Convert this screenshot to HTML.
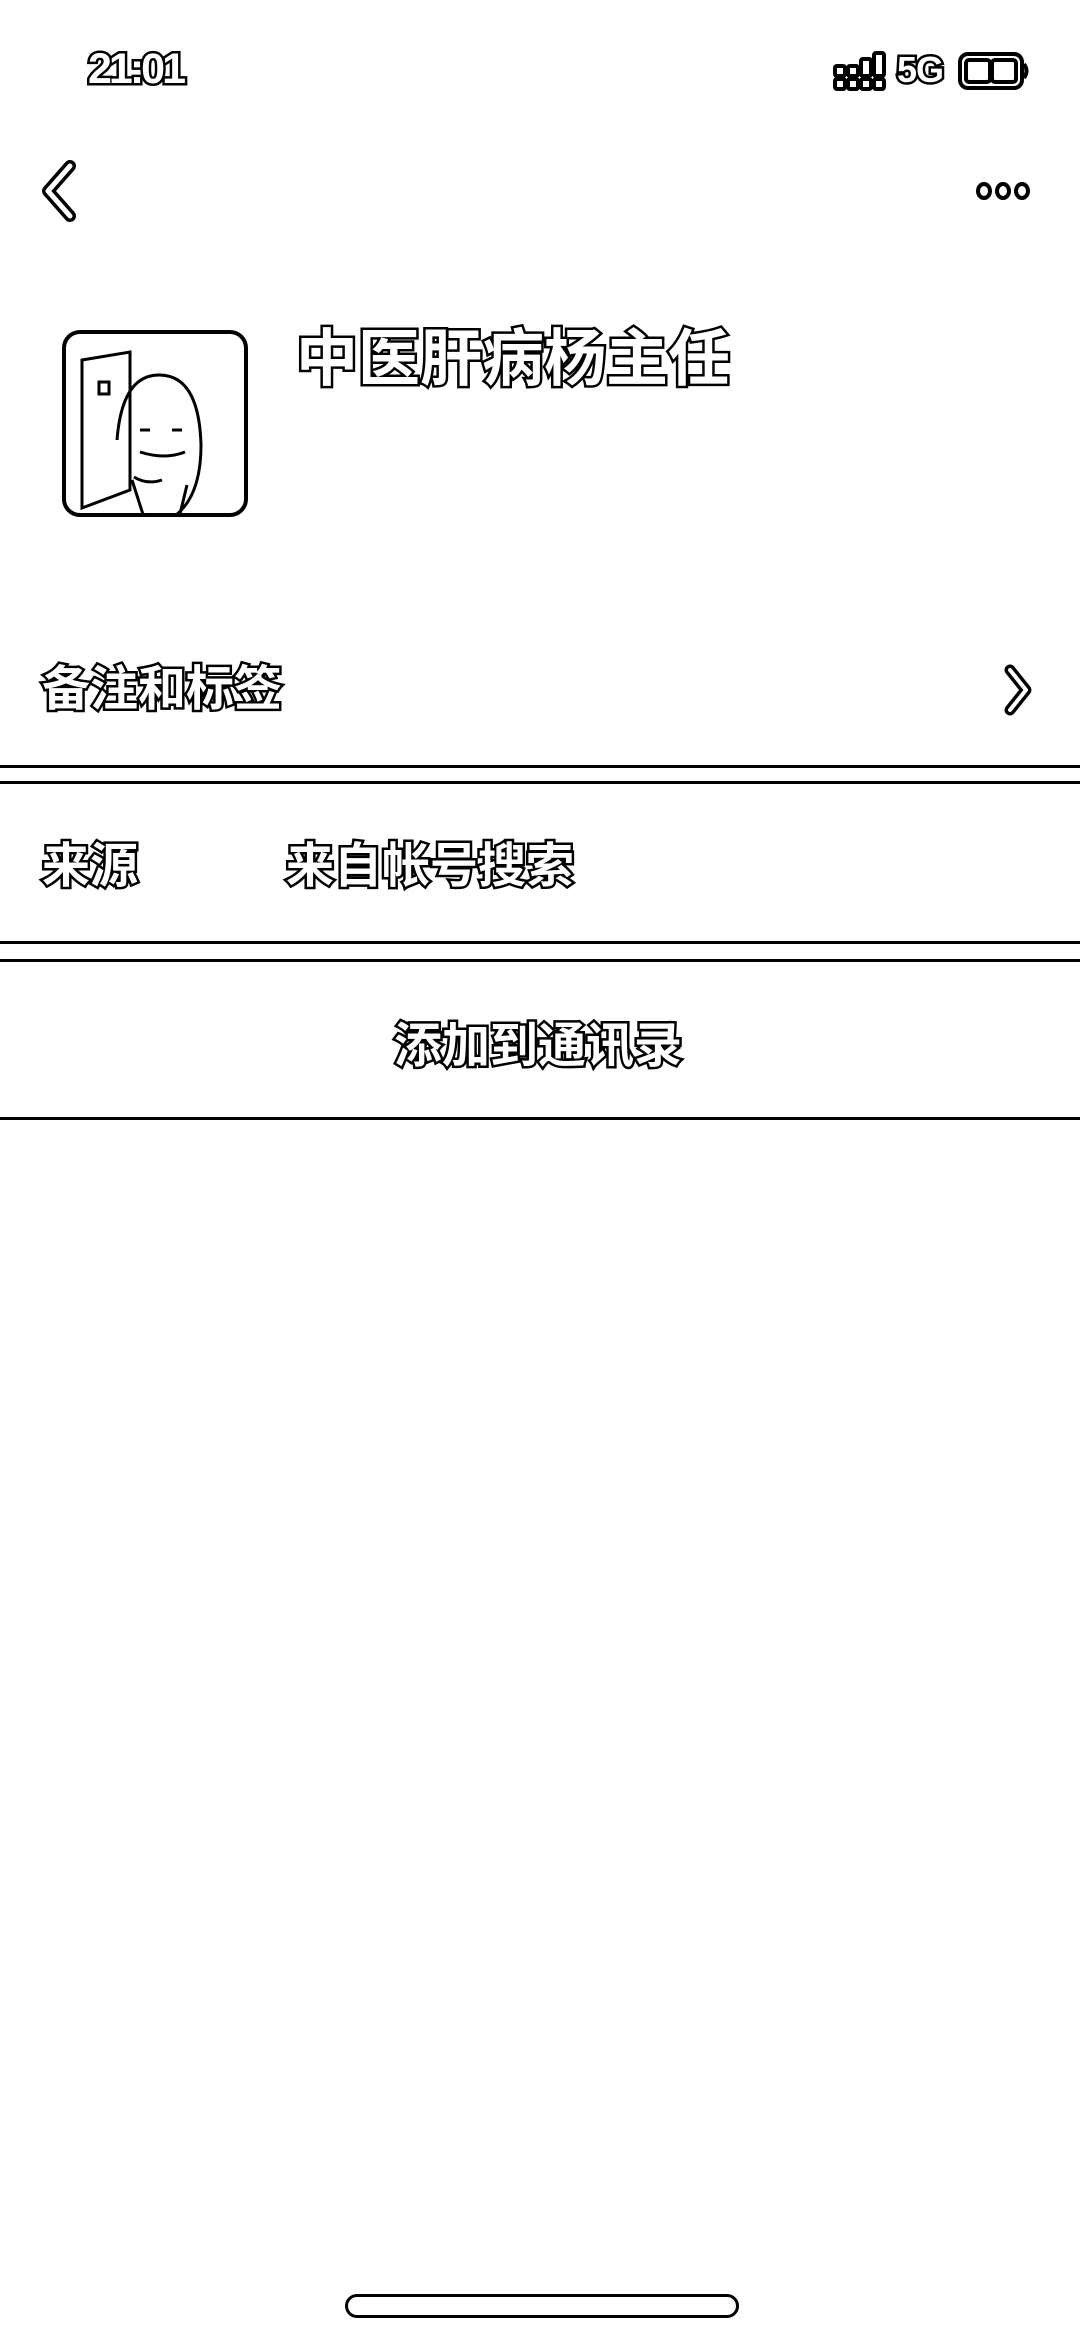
<!DOCTYPE html>
<html><head><meta charset="utf-8"><style>
html,body{margin:0;padding:0;background:#fff;}
body{width:1080px;height:2337px;position:relative;overflow:hidden;font-family:"Liberation Sans","Noto Sans CJK SC",sans-serif;}
.t{position:absolute;color:#fff;-webkit-text-stroke:5px #000;paint-order:stroke fill;font-weight:bold;white-space:nowrap;line-height:1;}
.line{position:absolute;left:0;width:1080px;height:3px;background:#000;}
</style></head><body>
<div class="t" style="left:88px;top:48px;font-size:43px;letter-spacing:-3px;">21:01</div>
<svg style="position:absolute;left:830px;top:48px" width="210" height="46" viewBox="0 0 210 46">
 <g fill="#fff" stroke="#000" stroke-width="4">
  <rect x="5" y="18" width="10" height="10" rx="2"/><rect x="5" y="31" width="10" height="10" rx="2"/>
  <rect x="18" y="18" width="10" height="10" rx="2"/><rect x="18" y="31" width="10" height="10" rx="2"/>
  <rect x="31" y="11" width="10" height="17" rx="2"/><rect x="31" y="31" width="10" height="10" rx="2"/>
  <rect x="44" y="5" width="10" height="23" rx="2"/><rect x="44" y="31" width="10" height="10" rx="2"/>
  <rect x="130" y="6" width="62" height="34" rx="8"/><rect x="136" y="12" width="24" height="22" rx="3"/><rect x="162" y="12" width="24" height="22" rx="3"/>
  <path d="M194 16 q5 7 0 14"/>
 </g>
</svg>
<div class="t" style="left:897px;top:52px;font-size:36px;-webkit-text-stroke:5px #000;letter-spacing:-1px;">5G</div>
<svg style="position:absolute;left:38px;top:160px" width="44" height="62" viewBox="0 0 44 62"><path d="M32 6 L10 31 L32 56" fill="none" stroke="#000" stroke-width="12" stroke-linecap="round" stroke-linejoin="round"/><path d="M32 6 L10 31 L32 56" fill="none" stroke="#fff" stroke-width="5" stroke-linecap="round" stroke-linejoin="round"/></svg>
<svg style="position:absolute;left:974px;top:180px" width="60" height="22" viewBox="0 0 60 22"><g fill="#fff" stroke="#000" stroke-width="4"><ellipse cx="10" cy="11" rx="6" ry="7"/><ellipse cx="29" cy="11" rx="6" ry="7"/><ellipse cx="48" cy="11" rx="6" ry="7"/></g></svg>
<svg style="position:absolute;left:62px;top:330px" width="186" height="187" viewBox="0 0 186 187">
 <rect x="2" y="2" width="182" height="183" rx="16" fill="#fff" stroke="#000" stroke-width="4"/>
 <g fill="none" stroke="#000" stroke-width="3">
  <path d="M20 30 L68 22 L68 160 L20 178 Z"/>
  <rect x="37" y="52" width="10" height="12"/>
  <path d="M55 110 q5-65 42-65 q40 0 42 70 q0 50-25 70"/>
  <path d="M78 100 l10 0 M110 100 l10 0 M100 150 q-15 5-28-3 M78 122 q25 8 45 0"/>
  <path d="M70 150 L102 250 L125 155"/>
 </g>
</svg>
<div class="t" style="left:296px;top:329px;font-size:62px;">中医肝病杨主任</div>
<div class="t" style="left:42px;top:666px;font-size:48px;">备注和标签</div>
<svg style="position:absolute;left:1000px;top:664px" width="36" height="52" viewBox="0 0 36 52"><path d="M10 6 L26 26 L10 46" fill="none" stroke="#000" stroke-width="11" stroke-linecap="round" stroke-linejoin="round"/><path d="M10 6 L26 26 L10 46" fill="none" stroke="#fff" stroke-width="4" stroke-linecap="round" stroke-linejoin="round"/></svg>
<div class="line" style="top:765px"></div>
<div class="line" style="top:781px"></div>
<div class="t" style="left:42px;top:843px;font-size:48px;">来源</div>
<div class="t" style="left:286px;top:843px;font-size:48px;">来自帐号搜索</div>
<div class="line" style="top:941px"></div>
<div class="line" style="top:959px"></div>
<div class="t" style="left:394px;top:1023px;font-size:48px;">添加到通讯录</div>
<div class="line" style="top:1117px"></div>
<div style="position:absolute;left:345px;top:2294px;width:388px;height:18px;border:3px solid #000;border-radius:12px;background:#fff;"></div>
</body></html>
